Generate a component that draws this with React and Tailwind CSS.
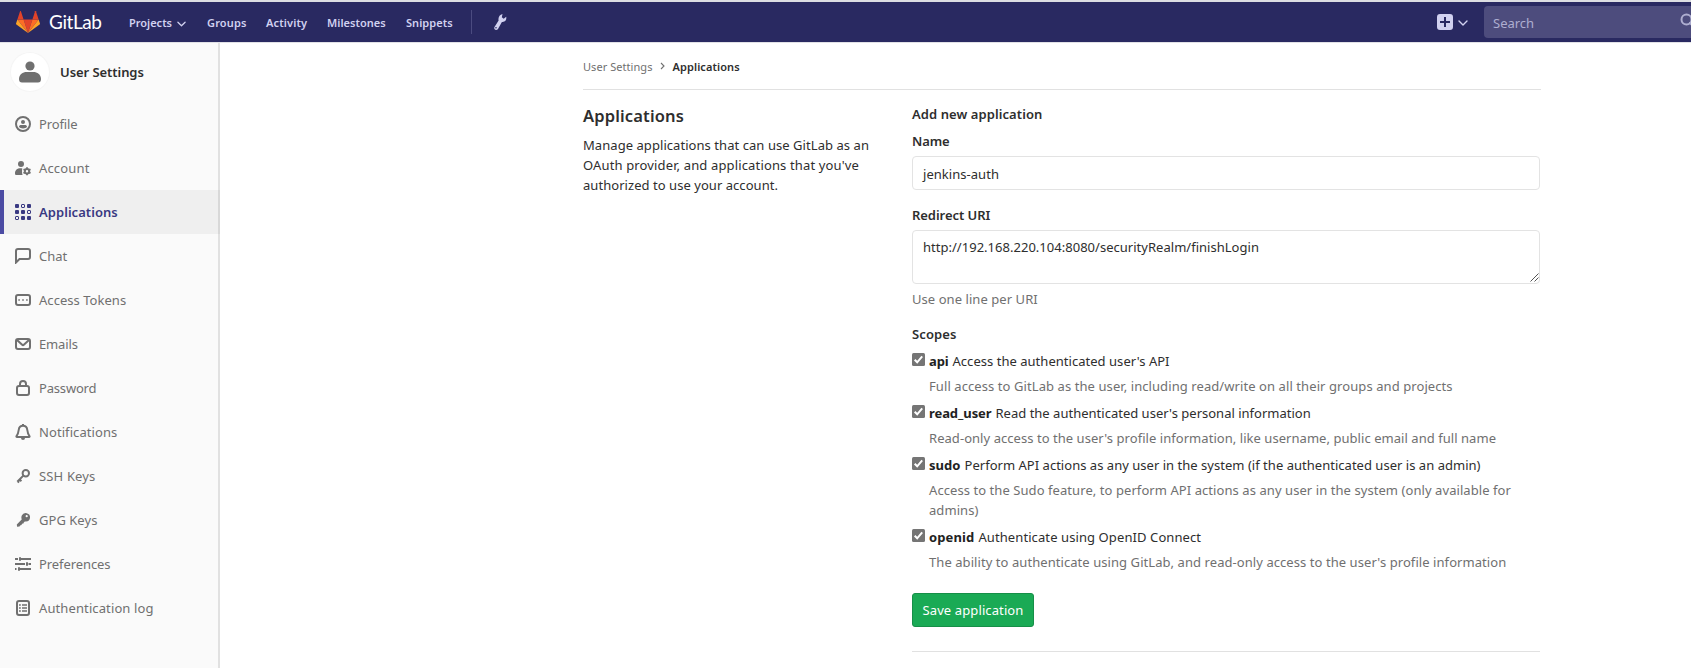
const Icon = ({ children, className = "size-4" }) => (
  <svg viewBox="0 0 16 16" fill="none" className={`${className} shrink-0`}>{children}</svg>
);

const icons = {
  profile: (
    <Icon>
      <circle cx="8" cy="8" r="7" stroke="currentColor" strokeWidth="2" />
      <circle cx="8" cy="6" r="2" fill="currentColor" />
      <path d="M4 10.8C4 9.6 5 9 6.200 9h3.600C11 9 12 9.600 12 10.800 11.300 12 9.900 12.500 8 12.500S4.700 12 4 10.800z" fill="currentColor" />
    </Icon>
  ),
  account: (
    <Icon>
      <circle cx="6" cy="4" r="3" fill="currentColor" />
      <path d="M7.500 8.500C6.800 8.800 7 15 7.800 15H1.500C.600 15 0 14.600 0 13.500 0 10.500 2 8.300 5 8.300c1 0 1.800 0 2.500.2z" fill="currentColor" />
      <circle cx="12" cy="11.200" r="2.200" stroke="currentColor" strokeWidth="2" />
      <path d="M12 7.200v1.500M12 13.700v1.500M8.500 9.200l1.400.8M14.100 12.400l1.400.8M8.500 13.200l1.400-.8M14.100 10l1.400-.8" stroke="currentColor" strokeWidth="1.800" />
    </Icon>
  ),
  applications: (
    <Icon>
      <g fill="currentColor">
        <rect width="4" height="4" rx="1" />
        <rect x="12" width="4" height="4" rx="1" />
        <rect y="6" width="4" height="4" rx="1" />
        <rect x="6" y="6" width="4" height="4" rx="1" />
        <rect x="6" y="12" width="4" height="4" rx="1" />
        <rect x="12" y="12" width="4" height="4" rx="1" />
      </g>
      <g stroke="currentColor">
        <rect x="6.500" y=".5" width="3" height="3" rx=".5" />
        <rect x="12.500" y="6.500" width="3" height="3" rx=".5" />
        <rect x=".5" y="12.500" width="3" height="3" rx=".5" />
      </g>
    </Icon>
  ),
  chat: (
    <Icon>
      <path d="M1 14.500V3a2 2 0 0 1 2-2h10a2 2 0 0 1 2 2v6a2 2 0 0 1-2 2H4.500L1 14.500z" stroke="currentColor" strokeWidth="2" />
    </Icon>
  ),
  token: (
    <Icon>
      <rect x="1" y="3" width="14" height="10" rx="2" stroke="currentColor" strokeWidth="2" />
      <path d="M3.300 8h1.600M7.200 8h1.600M11.100 8h1.600" stroke="currentColor" strokeWidth="1.600" />
    </Icon>
  ),
  email: (
    <Icon>
      <rect x="1" y="3" width="14" height="10" rx="2" stroke="currentColor" strokeWidth="2" />
      <path d="M2 4l4.900 4.600a1.600 1.600 0 0 0 2.200 0L14 4" stroke="currentColor" strokeWidth="2" />
    </Icon>
  ),
  lock: (
    <Icon>
      <rect x="2" y="6" width="12" height="9" rx="2" stroke="currentColor" strokeWidth="2" />
      <path d="M5 6V4a3 3 0 0 1 6 0v2" stroke="currentColor" strokeWidth="2" />
    </Icon>
  ),
  bell: (
    <Icon>
      <path d="M8 1.800c2.700 0 4 1.800 4.300 4.200.3 2.600.8 4.200 2.200 6.200.3.400 0 .8-.4.800H1.900c-.4 0-.7-.4-.4-.8 1.400-2 1.900-3.600 2.200-6.200C4 3.600 5.300 1.800 8 1.800z" stroke="currentColor" strokeWidth="2" />
      <path d="M7 0h2v2H7zM6 14h4a2 2 0 0 1-4 0z" fill="currentColor" />
    </Icon>
  ),
  key: (
    <Icon>
      <circle cx="10.800" cy="5.200" r="3.200" stroke="currentColor" strokeWidth="2" />
      <path d="M8.600 7.400L2.300 13.700M4.600 11.400l1.800 1.800M2.800 13.200l1.300 1.300" stroke="currentColor" strokeWidth="2" />
    </Icon>
  ),
  keySolid: (
    <Icon>
      <path fillRule="evenodd" d="M6.800 3.600A4.300 4.300 0 1 1 11 9.600l-1.200-.2-1 1.100-.4 1.100-1.400.2-.5 1.300-1.400.3-.6 1-2.400.3-.3-2.300 4.900-5c-.4-1.300-.5-2.600.1-3.800zM11.700 5.300a1.100 1.100 0 1 0 0-2.200 1.100 1.100 0 0 0 0 2.200z" fill="currentColor" />
    </Icon>
  ),
  preferences: (
    <Icon>
      <path d="M0 3h3M4 3h12M0 8h10M13.500 8H16M0 13h1.500M3 13h13" stroke="currentColor" strokeWidth="1.900" />
      <path d="M5 2v2M12 7v2M4 12v2" stroke="currentColor" strokeWidth="2" strokeLinecap="round" />
    </Icon>
  ),
  log: (
    <Icon>
      <rect x="2" y="1" width="12" height="14" rx="2" stroke="currentColor" strokeWidth="2" />
      <path d="M4 5h1.800M7 5h5M4 8h1.800M7 8h5M4 11h1.800M7 11h5" stroke="currentColor" strokeWidth="1.700" />
    </Icon>
  ),
};

const menu = [
  ["Profile", "profile", "tracking-[-0.12px]"],
  ["Account", "account", "tracking-[0.155px]"],
  ["Applications", "applications", "tracking-[0.05px]"],
  ["Chat", "chat", ""],
  ["Access Tokens", "token", "tracking-[0.04px]"],
  ["Emails", "email", "tracking-[-0.15px]"],
  ["Password", "lock", "tracking-[-0.18px]"],
  ["Notifications", "bell", "tracking-[0.08px]"],
  ["SSH Keys", "key", "tracking-[0.15px]"],
  ["GPG Keys", "keySolid", "tracking-[0.03px]"],
  ["Preferences", "preferences", "tracking-[-0.08px]"],
  ["Authentication log", "log", "tracking-[0.11px]"],
];

const scopes = [
  ["api", "tracking-[-0.13px]", "Access the authenticated user's API", "tracking-[0.03px]",
    "Full access to GitLab as the user, including read/write on all their groups and projects", "tracking-[0.082px]"],
  ["read_user", "tracking-[-0.08px]", "Read the authenticated user's personal information", "tracking-[0.008px]",
    "Read-only access to the user's profile information, like username, public email and full name", "tracking-[0.047px]"],
  ["sudo", "tracking-[0.046px]", "Perform API actions as any user in the system (if the authenticated user is an admin)", "tracking-[0.024px]",
    "Access to the Sudo feature, to perform API actions as any user in the system (only available for admins)", "tracking-[0.069px]"],
  ["openid", "tracking-[0.12px]", "Authenticate using OpenID Connect", "tracking-[0.095px]",
    "The ability to authenticate using GitLab, and read-only access to the user's profile information", "tracking-[0.065px]"],
];

const Chevron = ({ className }) => (
  <svg viewBox="0 0 10 6" fill="none" className={className}>
    <path d="M1 1l4 4 4-4" stroke="currentColor" strokeWidth="1.400" strokeLinecap="round" strokeLinejoin="round" />
  </svg>
);

function Header() {
  return (
    <header className="flex h-[43px] shrink-0 items-center overflow-hidden border-t-2 border-b border-t-[#dcdde2] border-b-[#e1e1e6] bg-[#292961] pl-4 text-[11px] font-semibold text-[#d1d1f0]">
      <svg viewBox="0 0 24 22" className="h-[22px] w-6 shrink-0">
        <path d="M12 22l4.420-13.600H7.580z" fill="#e24329" />
        <path d="M12 22L7.580 8.400H1.390z" fill="#fc6d26" />
        <path d="M1.390 8.400L.05 12.530a.9.900 0 0 0 .33 1.020L12 22z" fill="#fca326" />
        <path d="M1.390 8.400h6.190L4.920.3a.46.460 0 0 0-.87 0z" fill="#e24329" />
        <path d="M12 22l4.420-13.600h6.190z" fill="#fc6d26" />
        <path d="M22.610 8.400l1.340 4.130a.9.900 0 0 1-.33 1.020L12 22z" fill="#fca326" />
        <path d="M22.610 8.400h-6.190L19.080.3a.46.460 0 0 1 .87 0z" fill="#e24329" />
      </svg>
      <span className="ml-[9px] w-[79px] pb-0.5 font-[Lato] text-[19px] leading-none font-normal tracking-[-0.4px] text-white">GitLab</span>
      <nav className="flex items-center pt-px leading-4">
        <span className="ml-px w-12 tracking-[-0.008px]">Projects</span>
        <Chevron className="mt-0.5 mr-[21px] h-1.5 w-[9px]" />
        <span className="w-[59px] tracking-[0.141px]">Groups</span>
        <span className="w-[61px] tracking-[0.14px]">Activity</span>
        <span className="w-[79px] tracking-[0.03px]">Milestones</span>
        <span className="w-[65px] tracking-[0.05px]">Snippets</span>
      </nav>
      <span className="h-6 w-px bg-[#4b4b80]" />
      <svg viewBox="0 0 16 16" className="ml-[20px] size-4" fill="currentColor">
        <path fillRule="evenodd" d="M10.500 0L9.800 3.200l1.900 1.500 2.500-1.900c.4 2.100-.3 3.900-2 4.800-.8.400-1.600.5-2.300.3L6.400 14.300c-.5 1.100-1.400 1.800-2.600 1.600-1.400-.3-2-1.600-1.300-2.900L6.600 6.400C5.900 3.600 7.600.6 10.500 0zM4 14.600a.8.800 0 1 0 0-1.600.8.800 0 0 0 0 1.600z" />
      </svg>
      <div className="ml-auto flex items-center">
        <Icon>
          <path fillRule="evenodd" d="M3 0h10a3 3 0 0 1 3 3v10a3 3 0 0 1-3 3H3a3 3 0 0 1-3-3V3a3 3 0 0 1 3-3zm4 3v4H3v2h4v4h2V9h4V7H9V3z" fill="currentColor" />
        </Icon>
        <Chevron className="mt-0.5 ml-[5px] h-1.5 w-[10px]" />
        <div className="ml-4 flex h-8 w-[207px] shrink-0 items-center rounded-l bg-[#4d4c7d] pl-[9px] text-[13px] font-normal text-[#aeaed0]">
          <span className="pt-0.5">Search</span>
          <Icon className="-mt-0.5 ml-[146px] size-4">
            <circle cx="6.500" cy="6.500" r="5" stroke="currentColor" strokeWidth="2" />
            <path d="M10 10l4.500 4.500" stroke="currentColor" strokeWidth="2.200" strokeLinecap="round" />
          </Icon>
        </div>
      </div>
    </header>
  );
}

function Sidebar() {
  return (
    <aside className="flex w-[220px] shrink-0 flex-col border-r-2 border-[#e1e1e1] bg-[#fafafa] text-[#707070]">
      <div className="flex h-[59px] items-center pb-[2px] pl-[11px]">
        <span className="flex size-[38px] items-center justify-center rounded-full bg-white ring-1 ring-[#f5f5f5]">
          <svg viewBox="0 0 22 22" className="size-[22px]" fill="currentColor">
            <circle cx="11" cy="5" r="4.600" />
            <path d="M0 18c0-4.500 4-7 7.500-7h7c3.500 0 7.500 2.500 7.500 7 0 2.500-1 3.500-3 3.500H3c-2 0-3-1-3-3.500z" />
          </svg>
        </span>
        <span className="ml-[11px] text-[13px] leading-5 font-semibold tracking-[-0.06px] text-[#2e2e2e]">User Settings</span>
      </div>
      {menu.map(([label, icon, track]) => {
        const active = label === "Applications";
        return (
          <a
            key={label}
            className={`flex h-11 items-center gap-2 text-[13px] leading-5 ${active ? "-mr-0.5 border-r-2 border-l-4 border-r-[#d8d8d8] border-l-[#4b4ba3] bg-[#efefef] pl-[11px] font-semibold text-[#393982]" : "pl-[15px]"}`}
          >
            {icons[icon]}
            <span className={track}>{label}</span>
          </a>
        );
      })}
    </aside>
  );
}

function Checkbox() {
  return (
    <svg viewBox="0 0 13 13" className="mt-[-4px] size-[13px] shrink-0">
      <rect width="13" height="13" rx="1.500" fill="#757575" />
      <path d="M2.700 6.700l2.500 2.600 5-6" fill="none" stroke="#fff" strokeWidth="2" />
    </svg>
  );
}

export default function App() {
  return (
    <div className="flex h-[668px] w-[1691px] flex-col overflow-hidden bg-white font-['Noto_Sans',sans-serif] text-[13px] leading-5 text-[#2e2e2e]">
      <Header />
      <div className="flex min-h-0 grow">
        <Sidebar />
        <main className="ml-[363px] w-[958px]">
          <div className="flex h-[47px] items-center border-b border-[#e1e1e1] pt-[2px] text-[11px]">
            <span className="tracking-[0.056px] text-[#707070]">User Settings</span>
            <svg viewBox="0 0 5 8" fill="none" className="-mt-0.5 mr-2 ml-[7px] h-2 w-[5px]">
              <path d="M1 1l3 3-3 3" stroke="#707070" strokeWidth="1.100" />
            </svg>
            <span className="font-semibold tracking-[0.09px]">Applications</span>
          </div>
          <div className="flex">
            <section className="w-[329px] pt-[14px]">
              <h4 className="text-[16.500px] leading-6 font-semibold tracking-[0.147px]">Applications</h4>
              <p className="mt-[7px]">
                <span className="block tracking-[0.057px]">Manage applications that can use GitLab as an</span>
                <span className="block tracking-[0.142px]">OAuth provider, and applications that you've</span>
                <span className="block tracking-[0.047px]">authorized to use your account.</span>
              </p>
            </section>
            <section className="w-[628px] pt-[14px]">
              <h5 className="font-semibold tracking-[0.08px]">Add new application</h5>
              <div className="mt-[7px] font-semibold tracking-[-0.125px]">Name</div>
              <div className="mt-[5px] flex h-[34px] items-center rounded-sm border border-[#e3e3e3] pt-[2px] pl-[10px]">
                <span className="tracking-[0.04px]">jenkins-auth</span>
              </div>
              <div className="mt-[15px] font-semibold tracking-[-0.05px]">Redirect URI</div>
              <div className="mt-[5px] flex h-[54px] justify-between rounded-sm border border-[#e3e3e3] pt-[6px] pl-[10px]">
                <span className="tracking-[0.022px]">http://192.168.220.104:8080/securityRealm/finishLogin</span>
                <svg viewBox="0 0 9 9" className="mb-px size-[9px] self-end">
                  <path d="M.5 8.500l8-8M4.500 8.500l4-4" stroke="#555" />
                </svg>
              </div>
              <div className="mt-[5px] tracking-[0.06px] text-[#707070]">Use one line per URI</div>
              <div className="mt-[15px] font-semibold tracking-[0.108px]">Scopes</div>
              <div className="mt-[7px] flex flex-col gap-[7px]">
                {scopes.map(([name, t1, label, t2, help, t3]) => (
                  <div key={name}>
                    <div className="flex items-center whitespace-nowrap">
                      <Checkbox />
                      <b className={`ml-1 text-[#222] ${t1}`}>{name}</b>
                      <span className={`ml-1 ${t2}`}>{label}</span>
                    </div>
                    <p className={`mt-[5px] ml-[17px] w-[600px] text-[#707070] ${t3}`}>{help}</p>
                  </div>
                ))}
              </div>
              <button className="mt-[21px] flex h-[34px] w-[122px] items-center justify-center rounded-[3px] border border-[#168f48] bg-[#1aaa55] tracking-[0.111px] text-white">
                Save application
              </button>
              <hr className="mt-6 border-[#e1e1e1]" />
            </section>
          </div>
        </main>
      </div>
    </div>
  );
}
